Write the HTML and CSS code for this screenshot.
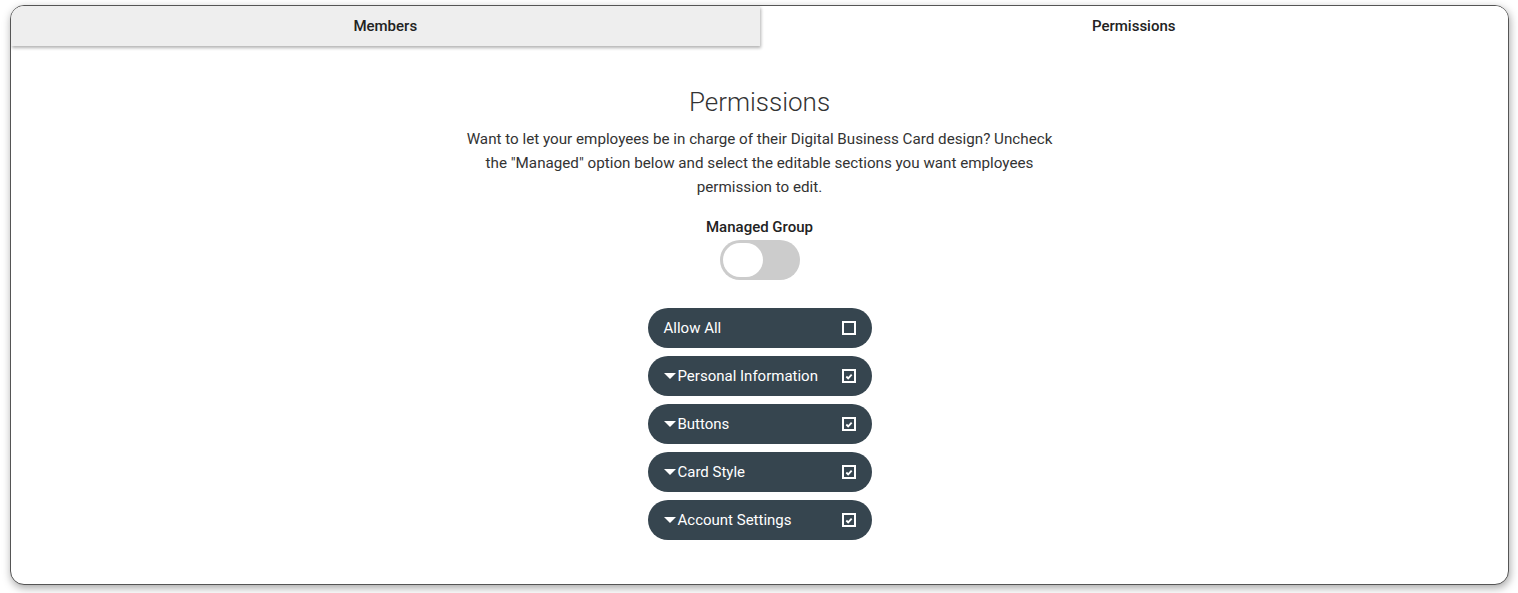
FILE: index.html
```html
<!DOCTYPE html>
<html>
<head>
<meta charset="utf-8">
<link rel="stylesheet" href="styles.css">
</head>
<body>
<div class="card">
  <div class="tabs">
    <div class="tab tab-inactive">Members</div>
    <div class="tab tab-active">Permissions</div>
  </div>
  <div class="content">
    <h1 class="title">Permissions</h1>
    <p class="desc">Want to let your employees be in charge of their Digital Business Card design? Uncheck the "Managed" option below and select the editable sections you want employees permission to edit.</p>
    <div class="managed-label">Managed Group</div>
    <div class="toggle"><span class="knob"></span></div>
    <div class="pills">
      <div class="pill">
        <span class="pill-label">Allow All</span>
        <span class="box"></span>
      </div>
      <div class="pill">
        <span class="pill-label"><span class="caret"></span>Personal Information</span>
        <span class="box checked"><svg viewBox="0 0 12 12" width="12" height="12"><path d="M2.8 6 L5 8.2 L9.2 3.8" fill="none" stroke="#fff" stroke-width="2.2"/></svg></span>
      </div>
      <div class="pill">
        <span class="pill-label"><span class="caret"></span>Buttons</span>
        <span class="box checked"><svg viewBox="0 0 12 12" width="12" height="12"><path d="M2.8 6 L5 8.2 L9.2 3.8" fill="none" stroke="#fff" stroke-width="2.2"/></svg></span>
      </div>
      <div class="pill">
        <span class="pill-label"><span class="caret"></span>Card Style</span>
        <span class="box checked"><svg viewBox="0 0 12 12" width="12" height="12"><path d="M2.8 6 L5 8.2 L9.2 3.8" fill="none" stroke="#fff" stroke-width="2.2"/></svg></span>
      </div>
      <div class="pill">
        <span class="pill-label"><span class="caret"></span>Account Settings</span>
        <span class="box checked"><svg viewBox="0 0 12 12" width="12" height="12"><path d="M2.8 6 L5 8.2 L9.2 3.8" fill="none" stroke="#fff" stroke-width="2.2"/></svg></span>
      </div>
    </div>
  </div>
</div>
</body>
</html>
```

FILE: styles.css
```css
* { box-sizing: border-box; }
html, body { margin: 0; padding: 0; background: #fff; }
body {
  font-family: Roboto, "Liberation Sans", Arial, sans-serif;
  color: #222;
  padding: 5px 9px 9px 10px;
}
.card {
  height: 580px;
  border: 1px solid #555;
  border-radius: 14px;
  box-shadow: 1px 3px 8px rgba(0,0,0,0.35);
  overflow: hidden;
  background: #fff;
}
.tabs {
  display: flex;
  height: 40px;
}
.tab {
  flex: 1;
  display: flex;
  align-items: center;
  justify-content: center;
  font-size: 15px;
  font-weight: 500;
  color: #222;
  padding-bottom: 1px;
}
.tab-inactive {
  background: #eeeeee;
  box-shadow: 1px 2px 3px rgba(0,0,0,0.3);
  position: relative;
  z-index: 1;
}
.tab-active { background: #fff; }
.content {
  display: flex;
  flex-direction: column;
  align-items: center;
}
.title {
  margin: 40px 0 0;
  font-size: 26px;
  font-weight: 300;
  line-height: 32px;
  color: #333;
}
.desc {
  margin: 9px 0 0;
  width: 592px;
  font-size: 15.2px;
  line-height: 24px;
  text-align: center;
  color: #333;
}
.managed-label {
  margin-top: 18px;
  font-size: 15px;
  font-weight: 500;
  line-height: 20px;
  color: #222;
}
.toggle {
  margin-top: 3px;
  width: 80px;
  height: 40px;
  border-radius: 20px;
  background: #cccccc;
  padding: 3px;
  display: flex;
}
.knob {
  width: 40px;
  height: 34px;
  border-radius: 17px;
  background: #fff;
}
.pills {
  margin-top: 28px;
  display: flex;
  flex-direction: column;
  gap: 8px;
}
.pill {
  width: 224px;
  height: 40px;
  border-radius: 20px;
  background: #36454f;
  color: #fff;
  display: flex;
  align-items: center;
  justify-content: space-between;
  padding: 0 16px 0 16px;
  font-size: 15px;
}
.pill-label {
  display: flex;
  align-items: center;
}
.caret {
  width: 0;
  height: 0;
  border-left: 6px solid transparent;
  border-right: 6px solid transparent;
  border-top: 6px solid #fff;
  margin-right: 2px;
}
.box {
  width: 14px;
  height: 14px;
  border: 2px solid #fff;
  display: flex;
  align-items: center;
  justify-content: center;
}
.box svg { display: block; width: 11px; height: 11px; }
```
